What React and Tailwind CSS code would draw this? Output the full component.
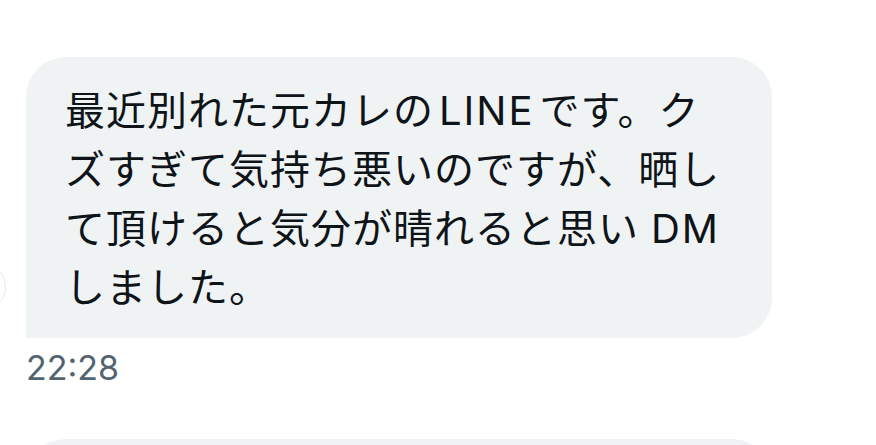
import React from "react";

const font = { fontFamily: '"Inter", "Noto Sans CJK JP", sans-serif' };

const Latin = ({ children, className = "" }) => (
  <span className={`mx-[5px] tracking-[2px] ${className}`}>{children}</span>
);

export default function App() {
  return (
    <div className="relative w-[876px] h-[445px] overflow-hidden bg-white" style={font}>
      {/* avatar edge peeking from the left */}
      <div className="absolute left-[-44px] top-[262px] w-[50px] h-[50px] rounded-full border border-[#e6e9eb]" />

      <div className="flex flex-col items-start pt-[57px] pl-[26px]">
        <div className="w-[746px] bg-[#eff3f4] rounded-[40px] rounded-bl-none pl-[39px] pr-4 pt-[24px] pb-[21px]">
          <p className="text-[40px] leading-[59px] text-[#0f1419] tracking-[1px] whitespace-nowrap">
            最近別れた元カレの<Latin>LINE</Latin>です。ク
            <br />
            ズすぎて気持ち悪いのですが、晒し
            <br />
            て頂けると気分が晴れると思い<Latin className="ml-[12px]">DM</Latin>
            <br />
            しました。
          </p>
        </div>

        <div className="mt-[10px] text-[34px] leading-[40px] text-[#536471]">22:28</div>

        <div className="mt-[51px] w-[746px] h-[60px] bg-[#eff3f4] rounded-t-[40px]" />
      </div>
    </div>
  );
}
